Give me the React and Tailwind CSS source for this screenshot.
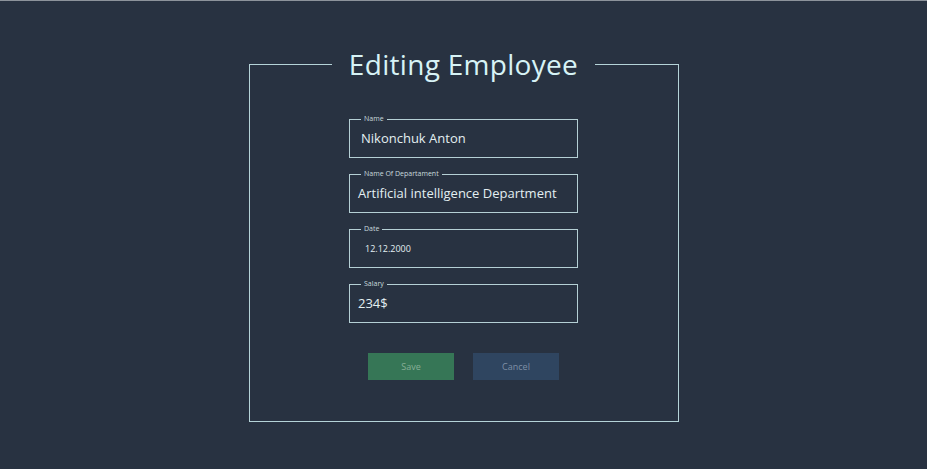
import React from "react";

const fields = [
  { label: "Name", value: "Nikonchuk Anton", textClass: "pl-[11px] text-[13px]" },
  { label: "Name Of Departament", value: "Artificial intelligence Department", textClass: "pl-[8px] text-[13px]" },
  { label: "Date", value: "12.12.2000", textClass: "pl-[15px] text-[9px]" },
  { label: "Salary", value: "234$", textClass: "pl-[8px] text-[13px]" },
];

const Field = ({ label, value, textClass }) => {
  return (
    <div className="relative h-[39px] w-[229px] border-[1.5px] border-[#b5d0d5] flex items-center">
      <span className="absolute -top-[6px] left-[11px] bg-[#283241] px-[3px] text-[7px] leading-[10px] text-[#c9dade]">
        {label}
      </span>
      <span className={`${textClass} text-[#e3eff1] whitespace-nowrap`}>{value}</span>
    </div>
  );
};

const App = () => {
  return (
    <div
      className="min-h-screen w-full bg-[#283241] border-t border-[#8d939b]"
      style={{ fontFamily: '"Open Sans", "Liberation Sans", sans-serif' }}
    >
      <div className="flex justify-center pt-[46px]">
        <fieldset className="m-0 p-0 w-[430px] h-[375px] border-[1.5px] border-[#b5d3d8] flex flex-col items-center">
          <legend className="mx-auto px-[17px] text-[28px] leading-[34px] font-medium tracking-[0.3px] text-[#d7f3f6]">
            Editing Employee
          </legend>
          <div className="mt-[38px] flex flex-col gap-[16px]">
            {fields.map((f, i) => (
              <Field key={i} {...f} />
            ))}
          </div>
          <div className="mt-[30px] flex gap-[19px]">
            <button className="w-[86px] h-[27px] bg-[#367656] text-[9px] text-[#86ae97]">Save</button>
            <button className="w-[86px] h-[27px] bg-[#2f4560] text-[9px] text-[#7f90a6]">Cancel</button>
          </div>
        </fieldset>
      </div>
    </div>
  );
};

export default App;
